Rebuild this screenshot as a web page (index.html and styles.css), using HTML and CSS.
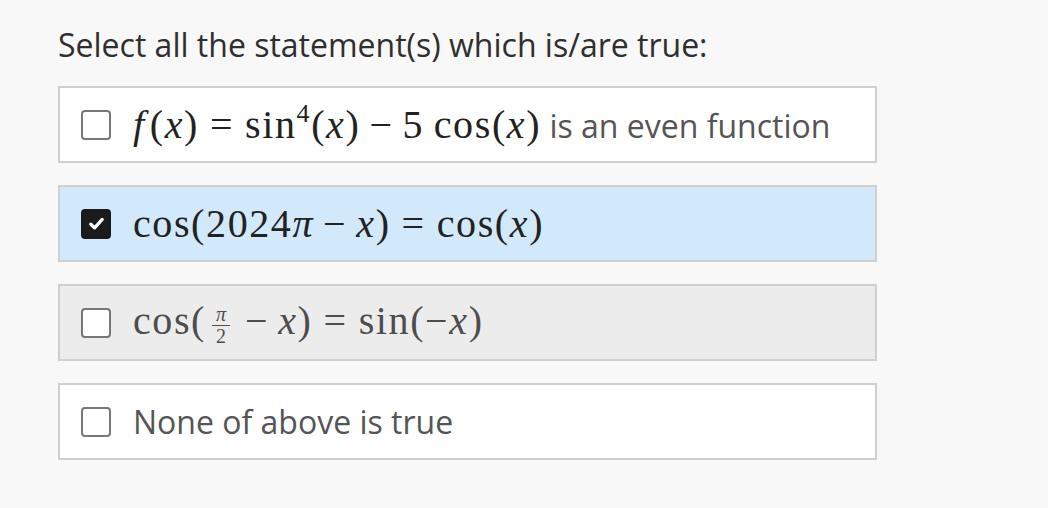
FILE: index.html
```html
<!DOCTYPE html>
<html lang="en">
<head>
  <meta charset="UTF-8">
  <meta name="viewport" content="width=device-width, initial-scale=1.0">
  <title>Select all true statements</title>
  <link rel="stylesheet" href="styles.css">
</head>
<body>
  <div class="question">
    <h2 class="prompt">Select all the statement(s) which is/are true:</h2>

    <ul class="options">
      <li class="option">
        <span class="check"></span>
        <span class="label">
          <span class="math"><i class="f">f</i>(<i>x</i>)<span class="rel">=</span>sin<sup>4</sup>(<i>x</i>)<span class="bin">−</span>5&thinsp;cos(<i>x</i>)</span> is an even function
        </span>
      </li>
      <li class="option selected">
        <span class="check">
          <svg viewBox="0 0 16 16" width="19" height="19"><path d="M3.2 8.6 6.4 11.6 12.8 4.6" fill="none" stroke="#fff" stroke-width="2.8" stroke-linecap="round" stroke-linejoin="round"/></svg>
        </span>
        <span class="label">
          <span class="math">cos(2024<i>π</i><span class="bin">−</span><i>x</i>)<span class="rel">=</span>cos(<i>x</i>)</span>
        </span>
      </li>
      <li class="option disabled">
        <span class="check"></span>
        <span class="label">
          <span class="math">cos(<span class="frac"><span class="num"><i>π</i></span><span class="den">2</span></span><span class="bin">−</span><i>x</i>)<span class="rel">=</span>sin(−<i>x</i>)</span>
        </span>
      </li>
      <li class="option">
        <span class="check"></span>
        <span class="label">None of above is true</span>
      </li>
    </ul>
  </div>
</body>
</html>
```

FILE: styles.css
```css
body {
  margin: 0;
  background: #f8f8f8;
  font-family: 'Open Sans', 'Noto Sans', sans-serif;
  color: #333;
}
.question {
  padding: 23px 0 0 58px;
  width: 819px;
}
.prompt {
  margin: 0 0 19px;
  font-size: 32px;
  font-weight: 400;
  line-height: 44px;
  color: #2f2f2f;
}
.options {
  list-style: none;
  margin: 0;
  padding: 0;
  display: flex;
  flex-direction: column;
  gap: 22px;
}
.option {
  box-sizing: border-box;
  height: 77px;
  display: flex;
  align-items: center;
  gap: 22px;
  padding: 0 0 0 21px;
  background: #fff;
  border: 2px solid #cfcfcf;
  font-size: 32px;
  color: #555;
}
.option.selected {
  background: #d2e8fb;
}
.option.disabled {
  background: #ececec;
}
.check {
  box-sizing: border-box;
  width: 30px;
  height: 30px;
  flex: none;
  border: 2px solid #777;
  border-radius: 4px;
  background: #fff;
  display: flex;
  align-items: center;
  justify-content: center;
}
.selected .check {
  background: #1b1b1b;
  border-color: #1b1b1b;
}
.label {
  white-space: nowrap;
}
.math {
  font-family: 'Liberation Serif', 'DejaVu Serif', serif;
  font-size: 40px;
  letter-spacing: 1.6px;
  color: #222;
}
.disabled .math {
  color: #4d4d4d;
}
.math i {
  font-style: italic;
}
.math .f {
  margin-right: 4px;
}
.math .rel {
  margin: 0 11px;
}
.math .bin {
  margin: 0 9px;
}
.math sup {
  font-size: 26px;
  vertical-align: 16px;
  line-height: 0;
}
.frac {
  display: inline-flex;
  flex-direction: column;
  align-items: center;
  vertical-align: 13px;
  font-size: 20px;
  letter-spacing: 0;
  line-height: normal;
  margin: 0 6px;
}
.frac .num {
  border-bottom: 1.5px solid currentColor;
  padding: 0 4px;
  margin-bottom: -3px;
  position: relative;
  z-index: 1;
}
.frac .num i {
  display: block;
  margin-bottom: -1px;
}
.frac .den {
  padding-top: 2px;
}
```
